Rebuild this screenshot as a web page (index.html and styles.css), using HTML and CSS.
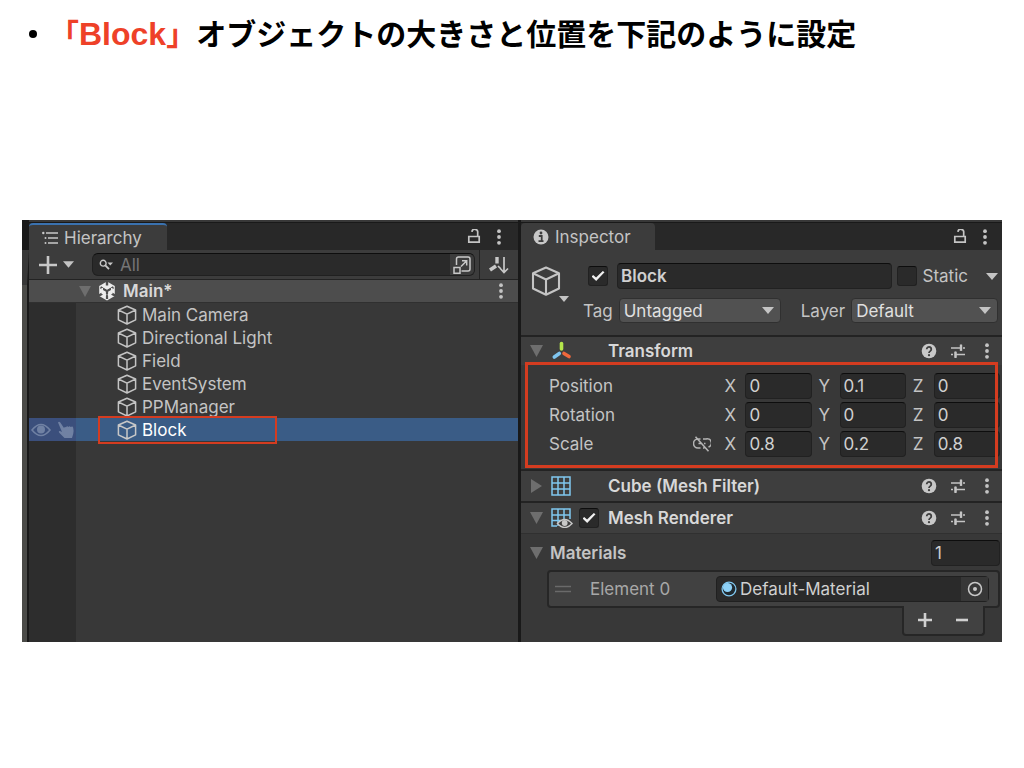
FILE: index.html
```html
<!DOCTYPE html>
<html lang="ja">
<head>
<meta charset="utf-8">
<title>Blockオブジェクトの設定</title>
<link rel="stylesheet" href="styles.css">
</head>
<body>
<svg class="defs" width="0" height="0" aria-hidden="true">
  <symbol id="cube" viewBox="0 0 20 20"><path d="M10 1.2 18.6 5v9.8L10 19 1.4 14.8V5zM1.4 5 10 9.2 18.6 5M10 9.2V19" fill="none" stroke="currentColor" stroke-width="1.5" stroke-linejoin="round"/></symbol>
  <symbol id="cube-large" viewBox="0 0 30 30"><path d="M15 1.5 28 7.3v15.2L15 28.8 2 22.5V7.3zM2 7.3l13 6.2 13-6.2M15 13.5v15.3" fill="none" stroke="currentColor" stroke-width="2.1" stroke-linejoin="round"/></symbol>
  <symbol id="down" viewBox="0 0 12 7"><path d="M0 0h12L6 7z" fill="currentColor"/></symbol>
  <symbol id="open" viewBox="0 0 13 12"><path d="M0 0h13L6.5 12z" fill="currentColor"/></symbol>
  <symbol id="closed" viewBox="0 0 13 14"><path d="M1 0v14l11-7z" fill="currentColor"/></symbol>
  <symbol id="dots" viewBox="0 0 6 16"><g fill="currentColor"><circle cx="3" cy="2.2" r="1.9"/><circle cx="3" cy="8" r="1.9"/><circle cx="3" cy="13.8" r="1.9"/></g></symbol>
  <symbol id="lock" viewBox="0 0 14 16"><g fill="none" stroke="currentColor" stroke-width="1.7"><path d="M1.800 7.500h10.400v5.700H1.800z"/><path d="M10.700 7.500V3.600a2.900 2.900 0 0 0-5.800-.8"/></g></symbol>
  <symbol id="help" viewBox="0 0 16 16"><circle cx="8" cy="8" r="7.3" fill="#c8c8c8"/><path d="M5.7 6.2a2.3 2.3 0 1 1 3.6 1.9C8.300 8.800 8 9 8 9.900" fill="none" stroke="#3e3e3e" stroke-width="1.8"/><circle cx="8" cy="12.200" r="1.100" fill="#3e3e3e"/></symbol>
  <symbol id="sliders" viewBox="0 0 16 14"><path d="M1 4h9M13 4h2M1 10.500h2M6 10.500h9M11 .5v6.500M5.500 7.500V14" fill="none" stroke="currentColor" stroke-width="1.500"/><path d="M11 .8v6M5.500 7.700v6" stroke="currentColor" stroke-width="2.400"/></symbol>
  <symbol id="mesh" viewBox="0 0 20 20"><path d="M1 1h18v18H1zM7 1v18M13 1v18M1 7h18M1 13h18" fill="none" stroke="#80c8f0" stroke-width="1.500"/></symbol>
</svg>

<ul class="slide-title">
  <li><span class="accent">「<span class="latin">Block</span>」</span>オブジェクトの大きさと位置を下記のように設定</li>
</ul>

<main class="editor">
  <div class="scene-edge"></div>

  <section class="panel hierarchy">
    <header class="tabs">
      <h2 class="tab tab-active">
        <svg width="16" height="14" viewBox="0 0 16 14"><path d="M4 2h12M6 7h10M6 12h10" stroke="#c8c8c8" stroke-width="1.500"/><g fill="#c8c8c8"><circle cx="1.300" cy="2" r="1.200"/><circle cx="3.500" cy="7" r="1"/><circle cx="3.500" cy="12" r="1"/></g></svg>
        Hierarchy
      </h2>
      <div class="tab-tools">
        <button aria-label="Lock"><svg width="14" height="16"><use href="#lock"/></svg></button>
        <button aria-label="Menu"><svg width="6" height="16"><use href="#dots"/></svg></button>
      </div>
    </header>
    <div class="toolbar">
      <button class="add" aria-label="Create">
        <svg width="18" height="18" viewBox="0 0 18 18"><path d="M9 0v18M0 9h18" stroke="#c8c8c8" stroke-width="2.600"/></svg>
        <svg width="11" height="7"><use href="#down"/></svg>
      </button>
      <div class="search">
        <svg width="14" height="12" viewBox="0 0 14 12"><circle cx="4.200" cy="4.200" r="2.900" fill="none" stroke="#c8c8c8" stroke-width="1.400"/><path d="m6.300 6.300 3.700 3.900" stroke="#c8c8c8" stroke-width="1.800"/><path d="M8.500 3.500H14l-2.700 3z" fill="#c8c8c8"/></svg>
        <input type="text" placeholder="All" aria-label="Search hierarchy">
        <button class="picker" aria-label="Open search"><svg width="18" height="18" viewBox="0 0 18 18"><g fill="none" stroke="#c8c8c8" stroke-width="1.500"><path d="M3.500 9V3q0-2 2-2H15q2 0 2 2v10q0 2-2 2H8.500M1 11.500h6v5.700H1zM8 10.500l5.500-5.500M9 4.800h4.700v4.700"/></g></svg></button>
      </div>
      <button class="sort" aria-label="Sort"><svg width="22" height="18" viewBox="0 0 22 18"><path d="M9 1v6.500" stroke="#c8c8c8" stroke-width="3.400"/><path d="m8 10-6 4" stroke="#c8c8c8" stroke-width="3.600"/><path d="m10 10 2.500 2.500M16 1v15M12.300 12.500l3.700 4 4-4" fill="none" stroke="#c8c8c8" stroke-width="1.700"/></svg></button>
    </div>
    <div class="scene-row">
      <svg class="fold" width="12" height="11"><use href="#open"/></svg>
      <svg width="20" height="20" viewBox="0 0 20 20"><path d="m10 .5 7.800 4.500v10L10 19.500 2.200 15V5z" fill="#ececec"/><path d="M10 10v8M10 10 3.500 6.200M10 10l6.500-3.800" stroke="#4d4d4d" stroke-width="2.200"/><path d="M10 0v4.500M1 15l4.300-2.400M19 15l-4.300-2.400" stroke="#4d4d4d" stroke-width="2.400"/><path d="m6 5.300 4 2.300 4-2.300M5.200 7v5l4 2.300M14.800 7v5l-4 2.300" fill="none" stroke="#ececec" stroke-width="1.700"/></svg>
      <strong>Main*</strong>
      <button aria-label="Scene menu"><svg width="6" height="16"><use href="#dots"/></svg></button>
    </div>
    <ul class="tree">
      <li><span class="gutter"></span><svg width="20" height="20"><use href="#cube"/></svg>Main Camera</li>
      <li><span class="gutter"></span><svg width="20" height="20"><use href="#cube"/></svg>Directional Light</li>
      <li><span class="gutter"></span><svg width="20" height="20"><use href="#cube"/></svg>Field</li>
      <li><span class="gutter"></span><svg width="20" height="20"><use href="#cube"/></svg>EventSystem</li>
      <li><span class="gutter"></span><svg width="20" height="20"><use href="#cube"/></svg>PPManager</li>
      <li class="selected"><span class="gutter">
          <svg width="20" height="14" viewBox="0 0 20 14"><path d="M1 7q9-11 18 0-9 11-18 0z" fill="none" stroke="#7081a3" stroke-width="1.600"/><circle cx="10" cy="6.500" r="4" fill="#7081a3"/></svg>
          <svg width="18" height="18" viewBox="0 0 18 18"><path d="M1 1.500q1-1.500 2.300 0L7 7q.5-1.500 2-.8 1-1.500 2.400-.3 1.200-1.300 2.300.2 2-1.200 2.500.6.800 3.300 0 6.300L15 17H7.500L2 11.500q-.8-2 1.600-1.300l1.400.7z" fill="#7081a3"/></svg>
        </span><svg width="20" height="20"><use href="#cube"/></svg>Block<span class="mark"></span></li>
      <li class="rest"><span class="gutter"></span></li>
    </ul>
  </section>

  <section class="panel inspector">
    <header class="tabs">
      <h2 class="tab">
        <svg width="16" height="16" viewBox="0 0 16 16"><circle cx="8" cy="8" r="7.500" fill="#c8c8c8"/><circle cx="8" cy="4" r="1.400" fill="#3c3c3c"/><path d="M5.800 7h2.900v4.800M5.500 12.200h5" fill="none" stroke="#3c3c3c" stroke-width="1.800"/></svg>
        Inspector
      </h2>
      <div class="tab-tools">
        <button aria-label="Lock"><svg width="14" height="16"><use href="#lock"/></svg></button>
        <button aria-label="Menu"><svg width="6" height="16"><use href="#dots"/></svg></button>
      </div>
    </header>

    <div class="object-head">
      <button class="object-icon" aria-label="Select icon">
        <svg width="30" height="30"><use href="#cube-large"/></svg>
        <svg class="corner" width="10" height="6"><use href="#down"/></svg>
      </button>
      <div class="object-fields">
        <div class="name-row">
          <input type="checkbox" aria-label="Active" checked>
          <input class="field name" type="text" aria-label="Name" value="Block">
          <label class="static"><input type="checkbox">Static</label>
          <button aria-label="Static options"><svg width="12" height="7"><use href="#down"/></svg></button>
        </div>
        <div class="tag-row">
          <label for="tag">Tag</label>
          <span class="drop"><select id="tag"><option>Untagged</option></select><svg width="12" height="7"><use href="#down"/></svg></span>
          <label class="layer" for="layer">Layer</label>
          <span class="drop"><select id="layer"><option>Default</option></select><svg width="12" height="7"><use href="#down"/></svg></span>
        </div>
      </div>
    </div>

    <div class="component-head">
      <svg class="fold" width="13" height="12"><use href="#open"/></svg>
      <svg width="22" height="20" viewBox="0 0 22 20"><g stroke-width="3.600" stroke-linecap="round"><path d="M10.500 2.500V8" stroke="#b4e64b"/><path d="m8.300 12.500-5 3.500" stroke="#7fc4ee"/><path d="m13 12.500 5 3" stroke="#f0683c"/></g></svg>
      <span class="toggle"></span>
      <h3>Transform</h3>
      <span class="tools"><svg width="16" height="16"><use href="#help"/></svg><svg width="16" height="14"><use href="#sliders"/></svg><svg width="6" height="16"><use href="#dots"/></svg></span>
    </div>
    <div class="transform">
      <div class="vector"><span class="vector-name">Position</span>
        <label>X<input class="field" type="text" value="0"></label><label>Y<input class="field" type="text" value="0.1"></label><label>Z<input class="field" type="text" value="0"></label></div>
      <div class="vector"><span class="vector-name">Rotation</span>
        <label>X<input class="field" type="text" value="0"></label><label>Y<input class="field" type="text" value="0"></label><label>Z<input class="field" type="text" value="0"></label></div>
      <div class="vector"><span class="vector-name">Scale
        <svg width="18" height="16" viewBox="0 0 18 16"><g fill="none" stroke="#b4b4b4" stroke-width="1.600"><path d="M7.500 3H5a4 4 0 0 0 0 9h2.500M10 3h3a4 4 0 0 1 2.500 8M5.500 7.500H8M11 7.500h1.500M10 12h1.500M2.500.8l13 14.400"/></g></svg></span>
        <label>X<input class="field" type="text" value="0.8"></label><label>Y<input class="field" type="text" value="0.2"></label><label>Z<input class="field" type="text" value="0.8"></label></div>
      <span class="mark"></span>
    </div>

    <div class="component-head">
      <svg class="fold" width="13" height="14"><use href="#closed"/></svg>
      <svg width="20" height="20"><use href="#mesh"/></svg>
      <span class="toggle wide"></span>
      <h3>Cube (Mesh Filter)</h3>
      <span class="tools"><svg width="16" height="16"><use href="#help"/></svg><svg width="16" height="14"><use href="#sliders"/></svg><svg width="6" height="16"><use href="#dots"/></svg></span>
    </div>
    <div class="component-head">
      <svg class="fold" width="13" height="12"><use href="#open"/></svg>
      <svg width="22" height="20" viewBox="0 0 22 20"><path d="M6 18H1V1h18v10M7 1v17M13 1v10M1 7h18M1 12.500h9" fill="none" stroke="#80c8f0" stroke-width="1.500"/><path d="M6.500 15.500q7.200-8 14.500 0-7.300 8-14.500 0z" fill="#3e3e3e" stroke="#c8c8c8" stroke-width="1.500"/><circle cx="13.700" cy="15" r="2.900" fill="#c8c8c8"/></svg>
      <span class="toggle"><input type="checkbox" aria-label="Mesh Renderer enabled" checked></span>
      <h3>Mesh Renderer</h3>
      <span class="tools"><svg width="16" height="16"><use href="#help"/></svg><svg width="16" height="14"><use href="#sliders"/></svg><svg width="6" height="16"><use href="#dots"/></svg></span>
    </div>

    <div class="materials">
      <div class="materials-head">
        <svg class="fold" width="13" height="12"><use href="#open"/></svg>
        <label for="count">Materials</label>
        <input id="count" class="field" type="text" value="1">
      </div>
      <div class="element">
        <svg width="16" height="8" viewBox="0 0 16 8"><path d="M0 1.500h16M0 6.500h16" stroke="#6a6a6a" stroke-width="1.400"/></svg>
        <span class="element-name">Element 0</span>
        <div class="object-field">
          <svg width="16" height="16" viewBox="0 0 16 16"><circle cx="8" cy="8" r="6.900" fill="#202a30" stroke="#80c8f0" stroke-width="1.300"/><circle cx="6.500" cy="6.500" r="4.600" fill="#8ed2f8"/></svg>
          <span>Default-Material</span>
          <button aria-label="Pick material"><svg width="16" height="16" viewBox="0 0 16 16"><circle cx="8" cy="8" r="6.500" fill="none" stroke="#c8c8c8" stroke-width="1.500"/><circle cx="8" cy="8" r="2" fill="#c8c8c8"/></svg></button>
        </div>
      </div>
      <div class="list-foot">
        <button aria-label="Add"><svg width="14" height="14" viewBox="0 0 14 14"><path d="M7 0v14M0 7h14" stroke="#d0d0d0" stroke-width="2.600"/></svg></button>
        <button aria-label="Remove"><svg width="12" height="14" viewBox="0 0 12 14"><path d="M0 7h12" stroke="#d0d0d0" stroke-width="2.600"/></svg></button>
      </div>
    </div>
  </section>
</main>
</body>
</html>
```

FILE: styles.css
```css
* { box-sizing: border-box; }

body {
  margin: 0;
  background: #fff;
  font-family: Inter, "Noto Sans CJK JP", sans-serif;
  font-optical-sizing: none;
}

svg { display: block; flex: none; }
.defs { position: absolute; }

button {
  display: flex;
  align-items: center;
  padding: 0;
  border: 0;
  background: none;
  color: inherit;
}

input, select { font: inherit; color: inherit; }

.slide-title {
  margin: 0;
  padding: 10px 22px 0 49px;
  list-style: none;
  font: bold 30px/44px "Noto Sans CJK JP", sans-serif;
  color: #000;
}
.slide-title li { position: relative; }
.slide-title li::before {
  content: "";
  position: absolute;
  left: -20px;
  top: 20px;
  width: 8px;
  height: 8px;
  border-radius: 50%;
  background: #000;
}
.accent { color: #ee4128; }
.latin { font: bold 32px/32px "Liberation Sans", sans-serif; }

.editor {
  display: grid;
  grid-template-columns: 7px 492fr 481fr;
  margin: 166px 22px 0;
  background: #191919;
  color: #c4c4c4;
  font-size: 17px;
  line-height: 22px;
}

.scene-edge {
  margin-top: 30px;
  border-top: 35px solid #383838;
  border-right: 2px solid #191919;
  background: #4b4b48;
}

.panel {
  display: flex;
  flex-direction: column;
  min-width: 0;
  padding-top: 2px;
  background: #383838;
}
.hierarchy { border-right: 3px solid #191919; }

.tabs {
  display: flex;
  align-items: stretch;
  height: 28px;
  background: #282828;
  border-top: 1px solid #191919;
}
.tab {
  display: flex;
  align-items: center;
  gap: 6px;
  margin: 0;
  padding: 0 24px 0 12px;
  border-radius: 4px 4px 0 0;
  background: #3c3c3c;
  font-size: 17px;
  font-weight: 400;
}
.tab-active {
  padding: 0 25px 0 13px;
  border-top: 2px solid #3a72b0;
}
.tab-tools {
  display: flex;
  align-items: center;
  gap: 15px;
  margin-left: auto;
  padding-right: 16px;
}
.inspector .tab-tools { padding-right: 14px; }

.toolbar {
  display: flex;
  height: 30px;
  background: #3c3c3c;
  border-bottom: 1px solid #232323;
}
.add { gap: 6px; width: 63px; padding-left: 10px; }
.search {
  display: flex;
  flex: 1;
  align-items: center;
  min-width: 0;
  margin: 3px 4px 3px 0;
  padding-left: 6px;
  border: 1px solid #202020;
  border-top-color: #0d0d0d;
  border-radius: 6px;
  background: #2a2a2a;
}
.search input {
  flex: 1;
  min-width: 0;
  padding: 0 7px;
  border: 0;
  background: none;
}
.search input::placeholder { color: #757575; opacity: 1; }
.picker {
  align-self: stretch;
  justify-content: center;
  width: 24px;
  border-radius: 0 5px 5px 0;
  background: #3c3c3c;
}
.sort {
  justify-content: center;
  width: 39px;
  border-left: 1px solid #232323;
}

.scene-row {
  display: flex;
  align-items: center;
  gap: 6px;
  height: 23px;
  padding: 0 14px 0 50px;
  background: #4d4d4d;
  border-bottom: 1px solid #303030;
}
.scene-row strong { font-weight: 600; color: #d8d8d8; }
.scene-row button { margin-left: auto; }

.fold { color: #6e6e6e; }

.tree {
  display: flex;
  flex: 1;
  flex-direction: column;
  margin: 0;
  padding: 0;
  list-style: none;
}
.tree li {
  position: relative;
  display: flex;
  align-items: center;
  gap: 5px;
  height: 23px;
}
.tree .rest { flex: 1; }
.gutter {
  display: flex;
  align-items: center;
  align-self: stretch;
  gap: 6px;
  width: 47px;
  margin-right: 36px;
  padding-left: 2px;
  background: #2d2d2d;
}
.tree .selected { background: #3a5c86; color: #fff; }
.selected > svg { color: #c8c8c8; }
.selected .gutter { background: #3b4f7c; }

.mark {
  position: absolute;
  border: 2px solid #d43c20;
  pointer-events: none;
}
.selected .mark { left: 69px; top: -2px; width: 179px; height: 28px; }
.transform .mark { inset: -3px 4px 1px 4px; border-width: 3px; }

.field {
  min-width: 0;
  height: 26px;
  padding: 0 3px;
  border: 1px solid #212121;
  border-top-color: #0d0d0d;
  border-radius: 4px;
  background: #2a2a2a;
  color: #d0d0d0;
}

input[type="checkbox"] {
  appearance: none;
  display: grid;
  place-items: center;
  flex: none;
  width: 20px;
  height: 20px;
  margin: 0;
  border: 1px solid #212121;
  border-top-color: #0d0d0d;
  border-radius: 3px;
  background: #2a2a2a;
}
input[type="checkbox"]:checked::before {
  content: "";
  width: 13px;
  height: 10px;
  background: #f0f0f0;
  clip-path: polygon(0 55%, 13% 40%, 35% 66%, 87% 0, 100% 12%, 36% 100%);
}

.object-head {
  display: flex;
  gap: 22px;
  height: 85px;
  padding: 13px 4px 0 10px;
  background: #3c3c3c;
}
.object-icon {
  position: relative;
  align-self: flex-start;
  margin-top: 3px;
}
.corner { position: absolute; right: -8px; bottom: -6px; }
.object-fields {
  display: flex;
  flex: 1;
  flex-direction: column;
  gap: 9px;
  min-width: 0;
}
.name-row, .tag-row, .static { display: flex; align-items: center; }
.name-row { padding-left: 5px; }
.name { flex: 1; margin: 0 5px 0 9px; font-weight: 600; }
.static { gap: 6px; margin-right: 18px; }
.tag-row { gap: 6px; }
.layer { margin-left: 14px; }
.drop { display: grid; flex: 160; align-items: center; min-width: 0; }
.layer + .drop { flex: 145; }
.drop select {
  grid-area: 1 / 1;
  appearance: none;
  min-width: 0;
  height: 25px;
  padding: 0 4px;
  border: 1px solid #303030;
  border-radius: 4px;
  background: #515151;
  color: #e0e0e0;
}
.drop svg { grid-area: 1 / 1; justify-self: end; margin-right: 7px; pointer-events: none; }

.component-head {
  display: flex;
  align-items: center;
  height: 32px;
  padding: 0 12px 0 9px;
  border-top: 2px solid #232323;
  background: #3e3e3e;
}
.component-head .fold { margin-right: 8px; }
.component-head h3 {
  flex: 1;
  margin: 0;
  font-size: 17px;
  font-weight: 600;
  color: #d8d8d8;
}
.toggle { width: 35px; padding-left: 6px; }
.toggle.wide { width: 37px; }
.tools { display: flex; align-items: center; gap: 13px; }
.tools svg:last-child { margin-left: 5px; }

.object-head + .component-head { height: 30px; }

.transform {
  position: relative;
  display: flex;
  flex-direction: column;
  gap: 3px;
  padding: 8px 2px 12px 28px;
}
.vector {
  display: grid;
  grid-template-columns: 168fr 87fr 87fr 87fr;
  gap: 7px;
}
.vector-name {
  display: flex;
  align-items: center;
  justify-content: space-between;
  padding-right: 6px;
}
.vector label {
  display: grid;
  grid-template-columns: 21px 1fr;
  align-items: center;
}

.materials { padding: 6px 2px 6px 9px; border-top: 1px solid #303030; }
.materials-head {
  display: flex;
  align-items: center;
  gap: 7px;
  font-weight: 600;
}
.materials-head .field { width: 69px; margin-left: auto; font-weight: 400; }
.element {
  display: flex;
  align-items: center;
  height: 38px;
  margin: 4px 0 0 17px;
  padding: 0 9px 0 6px;
  border: 2px solid #262626;
  border-radius: 4px;
  background: #414141;
}
.element-name { flex: 126; padding-left: 19px; color: #a8a8a8; }
.object-field {
  display: flex;
  flex: 267;
  align-items: center;
  gap: 3px;
  height: 26px;
  padding-left: 4px;
  border: 1px solid #202020;
  border-radius: 4px;
  background: #2a2a2a;
  color: #d0d0d0;
}
.object-field button {
  align-self: stretch;
  justify-content: center;
  width: 27px;
  margin-left: auto;
  background: #373737;
}
.list-foot {
  display: flex;
  justify-content: space-between;
  width: 83px;
  height: 30px;
  margin: -2px 15px 0 auto;
  padding: 0 15px 0 14px;
  border: 2px solid #262626;
  border-top: 0;
  border-radius: 0 0 4px 4px;
  background: #414141;
}
```
